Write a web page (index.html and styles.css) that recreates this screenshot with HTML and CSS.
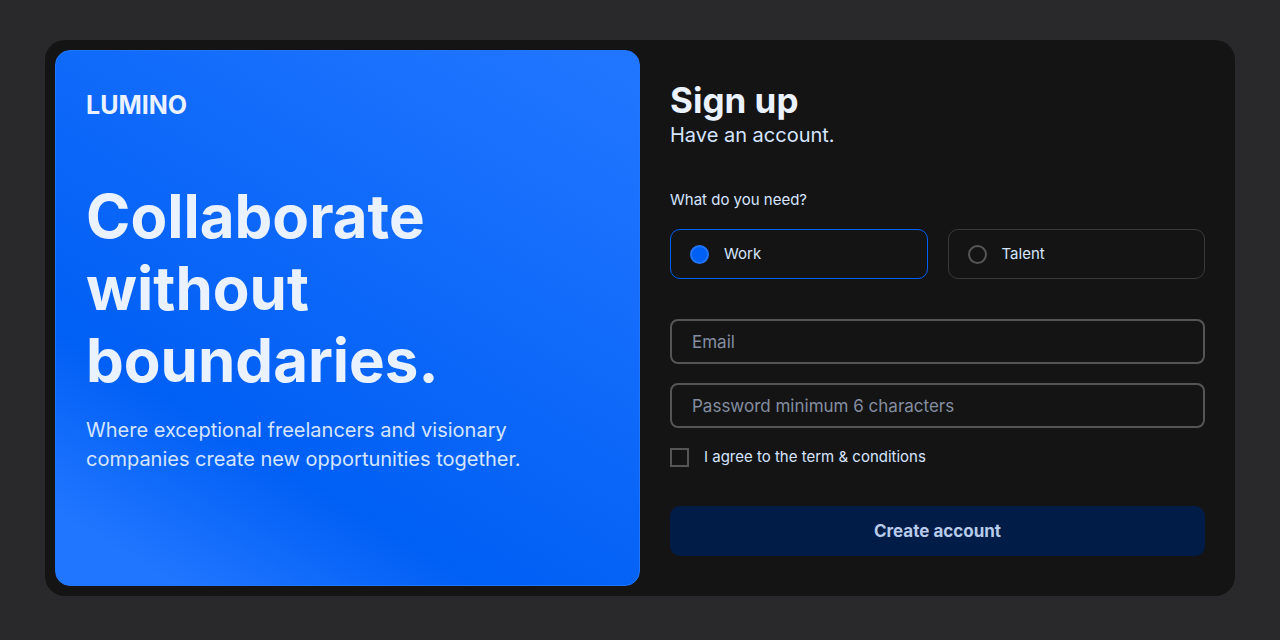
FILE: index.html
```html
<!DOCTYPE html>
<html lang="en">
<head>
<meta charset="utf-8">
<meta name="viewport" content="width=device-width, initial-scale=1">
<title>Lumino – Sign up</title>
<link rel="stylesheet" href="styles.css">
</head>
<body>
<main class="card">
  <section class="hero">
    <p class="logo">LUMINO</p>
    <h1 class="hero-title">Collaborate without boundaries.</h1>
    <p class="hero-text">Where exceptional freelancers and visionary companies create new opportunities together.</p>
  </section>
  <form class="form">
    <h2 class="form-title">Sign up</h2>
    <a class="login-link" href="#">Have an account.</a>
    <fieldset class="needs">
      <legend class="needs-label">What do you need?</legend>
      <div class="options">
        <label class="option"><input class="radio" type="radio" name="need" value="work" checked>Work</label>
        <label class="option"><input class="radio" type="radio" name="need" value="talent">Talent</label>
      </div>
    </fieldset>
    <input class="field" type="email" placeholder="Email" aria-label="Email">
    <input class="field" type="password" placeholder="Password minimum 6 characters" aria-label="Password">
    <label class="terms"><input class="checkbox" type="checkbox">I agree to the term &amp; conditions</label>
    <button class="submit" type="submit" disabled>Create account</button>
  </form>
</main>
</body>
</html>
```
FILE: styles.css
```css
* {
  box-sizing: border-box;
  margin: 0;
  padding: 0;
}

body {
  min-height: 100vh;
  padding: 40px 45px;
  background: #29292b;
  color: #ebf2ff;
  font-family: Inter, sans-serif;
}

.card {
  display: grid;
  grid-template-columns: 1fr 1fr;
  padding: 10px;
  border-radius: 20px;
  background: #141414;
}

.hero {
  padding: 39px 30px;
  border: 1px solid #2176ff;
  border-radius: 15px;
  background: linear-gradient(211deg, #2176ff 3%, #005ff5 71%, #2176ff 92%);
}

.logo {
  font-size: 25px;
  font-weight: 700;
  line-height: 30px;
}

.hero-title {
  margin-top: 60px;
  font-size: 60px;
  font-weight: 700;
  line-height: 72px;
}

.hero-text {
  margin-top: 20px;
  color: #d6e5ff;
  font-size: 20px;
  line-height: 29px;
}

.form {
  display: flex;
  flex-direction: column;
  padding: 30px 20px 30px 30px;
}

.form-title {
  font-size: 35px;
  font-weight: 700;
  line-height: 41px;
}

.login-link {
  align-self: flex-start;
  color: #d6e5ff;
  font-size: 20px;
  line-height: 28px;
  text-decoration: none;
}

.needs {
  margin: 40px 0;
  border: 0;
}

.needs-label,
.option,
.terms {
  color: #d6e5ff;
  font-size: 15px;
  line-height: 22px;
}

.options {
  display: grid;
  grid-template-columns: 1fr 1fr;
  gap: 20px;
  margin-top: 18px;
}

.option {
  display: flex;
  align-items: center;
  gap: 15px;
  height: 50px;
  padding: 0 19px;
  border: 1px solid #3a3a3a;
  border-radius: 10px;
}

.option:has(:checked) {
  border-color: #005ff5;
}

.radio,
.checkbox {
  width: 19px;
  height: 19px;
  border: 2px solid #555;
  appearance: none;
}

.radio {
  border-radius: 50%;
}

.radio:checked {
  border-color: #2176ff;
  background: #005ff5;
}

.field {
  width: 100%;
  height: 45px;
  margin-bottom: 19px;
  padding: 0 20px;
  border: 2px solid #555;
  border-radius: 8px;
  background: transparent;
  color: #ebf2ff;
  font-family: inherit;
  font-size: 17px;
}

.field::placeholder {
  color: #858ea0;
}

.terms {
  display: flex;
  align-items: center;
  align-self: flex-start;
  gap: 15px;
  line-height: 20px;
}

.submit {
  height: 50px;
  margin-top: 39px;
  border: 0;
  border-radius: 10px;
  background: #001c47;
  color: #b8cbea;
  font-family: inherit;
  font-size: 17px;
  font-weight: 700;
}
```
